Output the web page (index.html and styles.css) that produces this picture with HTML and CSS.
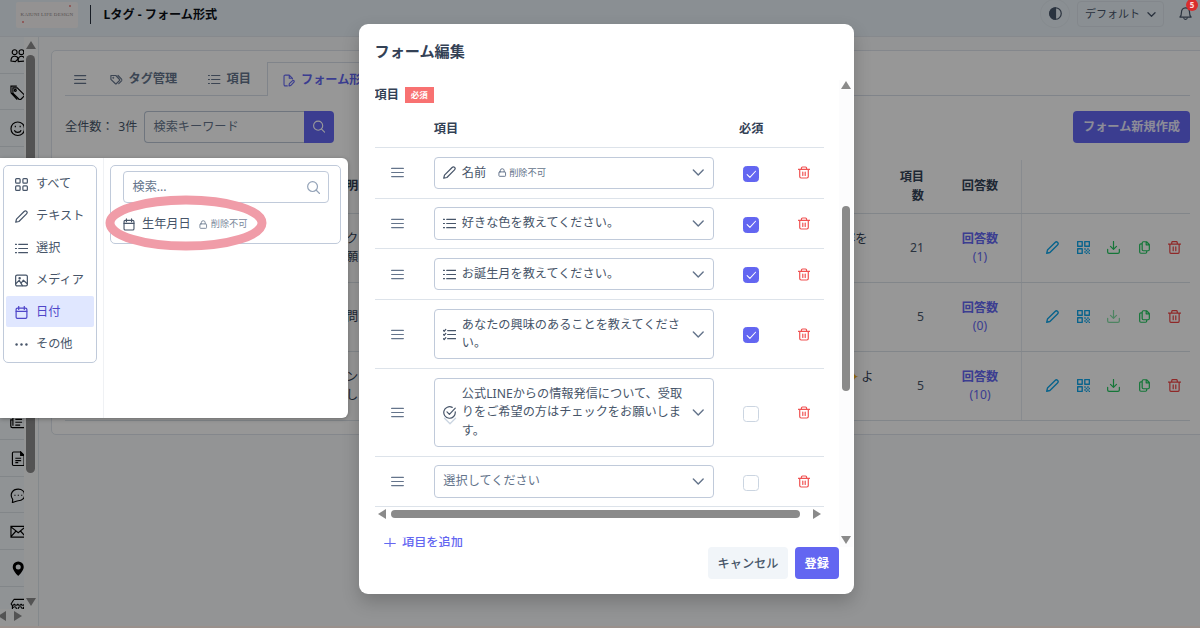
FILE: index.html
```html
<!DOCTYPE html>
<html lang="ja">
<head>
<meta charset="utf-8">
<title>Lタグ - フォーム形式</title>
<link rel="stylesheet" href="styles.css">
</head>
<body>
<svg class="defs" aria-hidden="true">
  <symbol id="bars" viewBox="0 0 14 14"><path d="M.7 2.6h12.6M.7 7h12.6M.7 11.4h12.6"/></symbol>
  <symbol id="pencil" viewBox="0 0 14 14"><path d="M.8 13.200l.8-3.400L9.800 1.600c1-1 1.900-.9 2.700-.1s.9 1.700-.1 2.700L4.200 12.400z"/></symbol>
  <symbol id="list" viewBox="0 0 14 14"><path d="M.4 2.500h1.200M.4 7h1.200M.4 11.500h1.200M4 2.500h9.600M4 7h9.600M4 11.500h9.600"/></symbol>
  <symbol id="check-list" viewBox="0 0 14 14"><path d="M.3 2.500l1 1 1.700-2M.3 6.800l1 1L3 5.800M.3 11.400l1 1 1.700-2M5 2.800h8.600M5 7h8.600M5 11.500h8.600"/></symbol>
  <symbol id="check-circle" viewBox="0 0 14 14"><path d="M13.200 6.300A6.200 6.200 0 1 1 9.900 1.500M4.300 6.300l2.600 2.700 6.300-6.700"/></symbol>
  <symbol id="lock" viewBox="0 0 14 14"><rect x="1.500" y="6" width="11" height="7.300" rx="1.200"/><path d="M3.800 6V4a3.200 3.200 0 0 1 6.400 0v2"/></symbol>
  <symbol id="chevron" viewBox="0 0 14 14"><path d="M1.500 4.200L7 9.700l5.500-5.500"/></symbol>
  <symbol id="tick" viewBox="0 0 14 14"><path d="M1.500 7.500l3.700 3.700L12.700 3"/></symbol>
  <symbol id="trash" viewBox="0 0 14 14"><path d="M.5 3.300h13M2 3.300v8.500c0 1 .6 1.600 1.600 1.600h6.800c1 0 1.600-.6 1.600-1.600V3.300M4 3.200V1.800c0-.8.5-1.200 1.200-1.200h3.600c.7 0 1.200.4 1.200 1.200v1.400M5.600 6.400v4M8.400 6.400v4"/></symbol>
  <symbol id="plus" viewBox="0 0 14 14"><path d="M7 .8v12.400M.8 7h12.400"/></symbol>
  <symbol id="search" viewBox="0 0 14 14"><circle cx="6" cy="6" r="5.300"/><path d="M10 10l3.500 3.500"/></symbol>
  <symbol id="grid" viewBox="0 0 14 14"><rect x=".7" y=".7" width="4.800" height="4.800" rx="1"/><rect x="8.500" y=".7" width="4.800" height="4.800" rx="1"/><rect x=".7" y="8.500" width="4.800" height="4.800" rx="1"/><rect x="8.500" y="8.500" width="4.800" height="4.800" rx="1"/></symbol>
  <symbol id="image" viewBox="0 0 14 14"><rect x=".7" y="1.200" width="12.600" height="11.600" rx="1.500"/><path d="M.8 10.500l3.700-3.700L8 12.500M6.500 10l2.500-3.300 4.200 3.800"/><circle cx="5" cy="4.500" r=".7"/></symbol>
  <symbol id="calendar" viewBox="0 0 14 14"><rect x="1.200" y="2.200" width="11.600" height="11.200" rx="1.500"/><path d="M1.200 5.700h11.600M4 .4v3.300M10 .4v3.300"/></symbol>
  <symbol id="dots" viewBox="0 0 14 14"><g fill="currentColor" stroke="none"><circle cx="1.700" cy="7" r="1.300"/><circle cx="7" cy="7" r="1.300"/><circle cx="12.300" cy="7" r="1.300"/></g></symbol>
  <symbol id="tags" viewBox="0 0 14 14"><path d="M1 2.500h5.500l4 4.200c.5.500.5 1 0 1.500l-3.200 3.300c-.5.500-1 .5-1.500 0L1 6.800zM9 2.500l4.200 4.300c.4.500.4.900 0 1.400L9.800 11.600"/><circle cx="3.700" cy="5.100" r=".4"/></symbol>
  <symbol id="file-edit" viewBox="0 0 14 14"><path d="M5 13.300H2.700c-.9 0-1.500-.6-1.500-1.500V2.200c0-.9.6-1.500 1.500-1.500h4.600l3.700 3.700v.8M7.300.8v3.500H11M7 13.300l.4-2.600 3.800-3.500c.9-.8 2.500.6 1.600 1.600l-3.600 3.900z"/></symbol>
  <symbol id="qr" viewBox="0 0 14 14"><path d="M.7.700h4.900v4.900H.7zM8.400.7h4.900v4.900H8.400zM.7 8.400h4.900v4.900H.7z"/><path stroke="none" fill="currentColor" d="M7.800 7.800h1.600v1.600H7.800zM11 7.800h1.600v1.600H11zM9.400 9.400H11V11H9.400zM12.600 9.400H14V11h-1.400zM7.800 11h1.600v1.600H7.800zM11 11h1.600v1.600H11zM9.400 12.600H11V14H9.400zM12.600 12.600H14V14h-1.400z"/></symbol>
  <symbol id="download" viewBox="0 0 14 14"><path d="M7 .5v8.300M3.800 5.800L7 9l3.200-3.200M.7 9v2.800c0 .9.6 1.500 1.500 1.500h9.600c.9 0 1.500-.6 1.500-1.500V9"/></symbol>
  <symbol id="copy" viewBox="0 0 14 14"><path d="M5.800.8h3.400l3 3v5.400c0 .8-.5 1.300-1.300 1.300H5.800c-.8 0-1.300-.5-1.300-1.300V2.100C4.500 1.300 5 .8 5.800.8zM8.800.8v3.300h3.400M4.300 3.200H3.100c-.8 0-1.300.5-1.300 1.300v7.400c0 .8.500 1.300 1.300 1.300h5c.8 0 1.300-.5 1.300-1.300v-1.200"/></symbol>
  <symbol id="contrast" viewBox="0 0 14 14"><circle cx="7" cy="7" r="6.200"/><path d="M7 .8a6.200 6.200 0 0 0 0 12.400z" fill="currentColor"/></symbol>
  <symbol id="bell" viewBox="0 0 14 14"><path d="M1 10.800c1.300-1 1.600-2 1.600-4.600C2.600 3 4.300 1 7 1s4.400 2 4.400 5.200c0 2.600.3 3.600 1.600 4.600zM5.300 12.200c.5 1.400 2.900 1.400 3.400 0"/></symbol>
  <symbol id="users" viewBox="0 0 16 16"><circle cx="4.800" cy="4.300" r="2.500"/><circle cx="11.800" cy="4.300" r="2.500"/><path d="M1 13.500c0-3.400 1.500-5 3.800-5s3.400 1 3.500 2.700L5.500 14zM8.500 14v-2.500c.6-2 1.800-3 3.500-3 2.300 0 3.500 1.500 3.500 5z"/></symbol>
  <symbol id="price-tags" viewBox="0 0 16 16"><path d="M3 3h4.500l7 7c.5.500.5 1 0 1.500L11 15c-.5.500-1 .5-1.500 0L3 8.500zM1 8V1.200h6M1 8l6.500 7"/><circle cx="5.500" cy="5.500" r="1"/></symbol>
  <symbol id="smile" viewBox="0 0 16 16"><circle cx="8" cy="8" r="7"/><path d="M4.500 9.500c1 3 6 3 7 0M5.500 5v1.500M10.500 5v1.500"/></symbol>
  <symbol id="news" viewBox="0 0 16 16"><path d="M3 2h12v12H2.500C1 14 .8 13 .8 12V6H3zM3 6v6M5.500 5.500h7M5.500 8.500h7M5.500 11.500h5"/></symbol>
  <symbol id="doc" viewBox="0 0 16 16"><path d="M3.700 1h7.300l3.500 3.500V15H3.700c-.6 0-1.200-.4-1.200-1.200V2.200C2.500 1.400 3.100 1 3.700 1z"/><path d="M11 1v3.500h3.500z" fill="currentColor"/><path d="M5.500 7.500h6M5.500 10h6M5.500 12h3"/></symbol>
  <symbol id="chat" viewBox="0 0 16 16"><path d="M2.500 15l.3-3.300C-.8 6.500 2.500 1.200 8.500 1.200c8.500 0 9 12 0 12-1.500 0-2.200.6-6 1.800z"/><path d="M4.500 7.500h1.200M8 7.500h1.200M11.500 7.500h1.200"/></symbol>
  <symbol id="mail" viewBox="0 0 16 16"><path d="M1 2.500h15v11H1zM1 3l7.500 6L16 3M1 13l5-5.500M16 13l-5-5.500"/></symbol>
  <symbol id="pin" viewBox="0 0 16 16"><path fill="currentColor" fill-rule="evenodd" stroke="none" d="M8.500.5a5.700 5.700 0 0 0-5.700 5.700c0 3.800 5.700 9.300 5.700 9.300s5.700-5.500 5.700-9.300A5.700 5.700 0 0 0 8.500.5zM8.500 3.600a2.600 2.600 0 1 1 0 5.200 2.600 2.600 0 0 1 0-5.200z"/></symbol>
  <symbol id="shop" viewBox="0 0 16 16"><path d="M4 1.500h12M4 1.500L1.200 6c0 2 2.800 2 3.300 0 .5 2 3 2 3.500 0 .5 2 3 2 3.500 0 .5 2 3 2 3.500 0M2.500 8v7M2.500 10.500c1.500-2 3.500-2 4 0v4M8.500 14.500v-4c.5-2 3.500-2 4 0v4M14 9v6"/></symbol>
</svg>

<div class="app">
  <header class="topbar">
    <div class="logo"><span>KAIUNI LIFE DESIGN</span></div>
    <div class="topbar-rule"></div>
    <h1 class="page-title">Lタグ - フォーム形式</h1>
    <div class="theme-button"><svg class="icon"><use href="#contrast"/></svg></div>
    <div class="account">デフォルト<svg class="icon icon-small"><use href="#chevron"/></svg></div>
    <div class="bell"><svg class="icon"><use href="#bell"/></svg></div>
  </header>

  <div class="body">
    <nav class="sidebar">
      <div class="side-items">
        <div class="side-item"><svg><use href="#users"/></svg></div>
        <div class="side-item"><svg><use href="#price-tags"/></svg></div>
        <div class="side-item"><svg><use href="#smile"/></svg></div>
        <div class="side-item"></div><div class="side-item"></div><div class="side-item"></div>
        <div class="side-item"></div><div class="side-item"></div><div class="side-item"></div>
        <div class="side-item"></div>
        <div class="side-item"><svg><use href="#news"/></svg></div>
        <div class="side-item"><svg><use href="#doc"/></svg></div>
        <div class="side-item"><svg><use href="#chat"/></svg></div>
        <div class="side-item"><svg><use href="#mail"/></svg></div>
        <div class="side-item"><svg><use href="#pin"/></svg></div>
        <div class="side-item"><svg><use href="#shop"/></svg></div>
      </div>
      <div class="side-scroll"><i class="arrow up"></i><i class="side-thumb"></i><i class="arrow down"></i></div>
      <div class="side-hscroll"><i class="arrow left"></i><i class="arrow right"></i></div>
    </nav>

    <main class="main">
      <section class="card">
        <div class="tabs">
          <div class="tab tab-menu"><svg class="icon"><use href="#bars"/></svg></div>
          <div class="tab tab-tags"><svg class="icon"><use href="#tags"/></svg>タグ管理</div>
          <div class="tab tab-items"><svg class="icon"><use href="#list"/></svg>項目</div>
          <div class="tab tab-active"><svg class="icon"><use href="#file-edit"/></svg>フォーム形式</div>
          <div class="tab-fill"></div>
        </div>
        <div class="toolbar">
          <span class="count">全件数： <span>3件</span></span>
          <div class="keyword">検索キーワード</div>
          <div class="search-button"><svg class="icon"><use href="#search"/></svg></div>
          <div class="create-button">フォーム新規作成</div>
        </div>
        <div class="table">
          <div class="tr th">
            <div></div><div class="desc"><p><span>明</span></p></div><div class="num">項目<br>数</div><div class="answers">回答数</div><div class="actions"></div>
          </div>
          <div class="tr">
            <div></div><div class="desc"><p><span>ク</span><span class="end-a">容を</span></p><p><span>願</span></p></div><div class="num">21</div><div class="answers link"><b>回答数</b><br>(1)</div>
            <div class="actions"><svg class="icon blue"><use href="#pencil"/></svg><svg class="icon blue"><use href="#qr"/></svg><svg class="icon green"><use href="#download"/></svg><svg class="icon green"><use href="#copy"/></svg><svg class="icon red"><use href="#trash"/></svg></div>
          </div>
          <div class="tr">
            <div></div><div class="desc"><p><span>問</span></p></div><div class="num">5</div><div class="answers link"><b>回答数</b><br>(0)</div>
            <div class="actions"><svg class="icon blue"><use href="#pencil"/></svg><svg class="icon blue"><use href="#qr"/></svg><svg class="icon green faded"><use href="#download"/></svg><svg class="icon green"><use href="#copy"/></svg><svg class="icon red"><use href="#trash"/></svg></div>
          </div>
          <div class="tr">
            <div></div><div class="desc"><p><span>ン</span><span class="end-b"><em>✦</em>よ</span></p><p><span>し</span></p></div><div class="num">5</div><div class="answers link"><b>回答数</b><br>(10)</div>
            <div class="actions"><svg class="icon blue"><use href="#pencil"/></svg><svg class="icon blue"><use href="#qr"/></svg><svg class="icon green"><use href="#download"/></svg><svg class="icon green"><use href="#copy"/></svg><svg class="icon red"><use href="#trash"/></svg></div>
          </div>
        </div>
      </section>
    </main>
  </div>
</div>

<div class="overlay">
  <section class="modal">
    <h2 class="modal-title">フォーム編集</h2>
    <div class="modal-body">
      <div class="form">
        <div class="field-label">項目<span class="required">必須</span></div>
        <div class="row row-head"><span></span><span>項目</span><span class="center">必須</span><span></span></div>
        <div class="row">
          <svg class="icon handle"><use href="#bars"/></svg>
          <div class="select"><svg class="icon"><use href="#pencil"/></svg><span class="value">名前<small><svg class="icon"><use href="#lock"/></svg>削除不可</small></span><svg class="icon chev"><use href="#chevron"/></svg></div>
          <i class="check on"><svg class="icon"><use href="#tick"/></svg></i><svg class="icon trash"><use href="#trash"/></svg>
        </div>
        <div class="row">
          <svg class="icon handle"><use href="#bars"/></svg>
          <div class="select"><svg class="icon"><use href="#list"/></svg><span class="value">好きな色を教えてください。</span><svg class="icon chev"><use href="#chevron"/></svg></div>
          <i class="check on"><svg class="icon"><use href="#tick"/></svg></i><svg class="icon trash"><use href="#trash"/></svg>
        </div>
        <div class="row">
          <svg class="icon handle"><use href="#bars"/></svg>
          <div class="select"><svg class="icon"><use href="#list"/></svg><span class="value">お誕生月を教えてください。</span><svg class="icon chev"><use href="#chevron"/></svg></div>
          <i class="check on"><svg class="icon"><use href="#tick"/></svg></i><svg class="icon trash"><use href="#trash"/></svg>
        </div>
        <div class="row row-two">
          <svg class="icon handle"><use href="#bars"/></svg>
          <div class="select"><svg class="icon"><use href="#check-list"/></svg><span class="value">あなたの興味のあることを教えてくださ<br>い。</span><svg class="icon chev"><use href="#chevron"/></svg></div>
          <i class="check on"><svg class="icon"><use href="#tick"/></svg></i><svg class="icon trash"><use href="#trash"/></svg>
        </div>
        <div class="row row-three">
          <svg class="icon handle"><use href="#bars"/></svg>
          <div class="select"><span class="consent"><svg class="icon"><use href="#check-circle"/></svg><svg class="icon hint"><use href="#chevron"/></svg></span><span class="value">公式LINEからの情報発信について、受取<br>りをご希望の方はチェックをお願いしま<br>す。</span><svg class="icon chev"><use href="#chevron"/></svg></div>
          <i class="check"></i><svg class="icon trash"><use href="#trash"/></svg>
        </div>
        <div class="row row-last">
          <svg class="icon handle"><use href="#bars"/></svg>
          <div class="select placeholder"><span class="value">選択してください</span><svg class="icon chev"><use href="#chevron"/></svg></div>
          <i class="check"></i><svg class="icon trash"><use href="#trash"/></svg>
        </div>
        <div class="hscroll"><i class="arrow left"></i><i class="hthumb"></i><i class="arrow right"></i></div>
        <div class="add"><svg class="icon"><use href="#plus"/></svg>項目を追加</div>
      </div>
      <div class="vscroll"><i class="arrow up"></i><i class="vthumb"></i><i class="arrow down"></i></div>
    </div>
    <footer class="modal-footer"><div class="btn cancel">キャンセル</div><div class="btn submit">登録</div></footer>
  </section>
</div>

<div class="badge">5</div>

<section class="picker">
  <div class="picker-side">
    <div class="categories">
      <div class="category"><svg class="icon"><use href="#grid"/></svg>すべて</div>
      <div class="category"><svg class="icon"><use href="#pencil"/></svg>テキスト</div>
      <div class="category"><svg class="icon"><use href="#list"/></svg>選択</div>
      <div class="category"><svg class="icon"><use href="#image"/></svg>メディア</div>
      <div class="category selected"><svg class="icon"><use href="#calendar"/></svg>日付</div>
      <div class="category"><svg class="icon"><use href="#dots"/></svg>その他</div>
    </div>
  </div>
  <div class="picker-main">
    <div class="results">
      <div class="picker-search">検索...<svg class="icon"><use href="#search"/></svg></div>
      <div class="result"><svg class="icon"><use href="#calendar"/></svg>生年月日<small><svg class="icon"><use href="#lock"/></svg>削除不可</small></div>
    </div>
  </div>
  <svg class="marker" viewBox="0 0 162 56"><ellipse cx="81" cy="28" rx="76" ry="23"/></svg>
</section>
</body>
</html>
```

FILE: styles.css
```css
* { box-sizing: border-box; }
body {
  margin: 0;
  width: 1200px;
  height: 628px;
  overflow: hidden;
  position: relative;
  font: 12.180px/18.400px "Noto Sans", "Noto Sans CJK JP", sans-serif;
  color: #475569;
}
h1, h2, p { margin: 0; }
.defs { position: absolute; width: 0; height: 0; }
.icon {
  width: 13px; height: 13px; flex: none; display: block;
  fill: none; stroke: currentColor; stroke-width: 1.300;
  stroke-linecap: round; stroke-linejoin: round; overflow: visible;
}
.icon-small { width: 9px; height: 9px; stroke-width: 2; }

/* Scrollbar arrows */
.arrow { display: block; width: 0; height: 0; border: 5px solid transparent; flex: none; }
.arrow.up { border-top: 0; border-bottom: 8px solid #8a8a8a; }
.arrow.down { border-bottom: 0; border-top: 8px solid #8a8a8a; }
.arrow.left { border-left: 0; border-right: 8px solid #8a8a8a; }
.arrow.right { border-right: 0; border-left: 8px solid #8a8a8a; }

/* Application shell */
.app { height: 628px; display: flex; flex-direction: column; background: #f5f7f9; border-bottom: 2px solid #fff0ea; }
.topbar {
  height: 37px; flex: none; display: flex; align-items: flex-start;
  background: #e7eff5; border-bottom: 1px solid #dfe5eb; padding-left: 16px;
}
.logo {
  width: 62px; height: 26px; margin-top: 2px; background: #f7f4f4; border-radius: 2px;
  display: flex; align-items: center; justify-content: center;
  font: 5px/6px "Liberation Serif", serif; letter-spacing: .2px; color: #8f8585; white-space: nowrap;
  background-image: radial-gradient(circle at 54px 4px, #ee9a9a 1px, transparent 1.500px), radial-gradient(circle at 7px 20px, #ee9a9a 1px, transparent 1.500px);
}
.topbar-rule { width: 1px; height: 19px; margin: 5px 12.500px 0 12px; background: #27303c; }
.page-title { font-size: 12.150px; line-height: 18px; font-weight: 700; color: #0b0f17; margin-top: 6px; white-space: nowrap; flex: 1; }
.theme-button { width: 30px; height: 29px; border: 1px solid #dfe7ee; border-radius: 50%; display: grid; place-items: center; margin-right: 7px; margin-top: -1px; }
.account { width: 87px; height: 26px; border: 1px solid #dae2e9; border-radius: 4px; display: flex; align-items: center; justify-content: center; gap: 7px; font-size: 11px; margin: 1px 15px 0 0; }
.bell { width: 21px; padding-top: 7px; }
.body { flex: 1; min-height: 0; display: flex; }
.sidebar { width: 39px; flex: none; border-right: 1px solid #dde4ea; display: grid; grid-template: 572px 1fr / 24px 1fr; background: #f7f8f9; color: #000; }
.side-items { overflow: hidden; background: #f1f5f8; }
.side-item { width: 36px; height: 36.650px; border-bottom: 1px solid #d9dfe5; display: flex; align-items: center; justify-content: center; padding-top: 2px; }
.side-item svg { width: 15.500px; height: 15.500px; fill: none; stroke: currentColor; stroke-width: 1.2; }
.side-scroll { display: flex; flex-direction: column; align-items: center; padding: 4px 1px 0 0; }
.side-thumb { width: 8.500px; height: 418px; border-radius: 5px; background: #8a8a8a; margin: 6px 0 125px; flex: none; }
.side-hscroll { grid-column: 1 / 3; display: flex; gap: 8px; padding-top: 2px; margin-left: -2px; }
.main { flex: 1; min-width: 0; padding: 13px 0 0 12px; }

.card { width: 1160px; height: 385px; border: 1px solid #dce2e9; border-radius: 5px; background: #fcfcfc; padding: 11px 0 0 13px; }
.tabs { display: flex; width: 1125px; height: 34px; }
.tab { display: flex; align-items: center; gap: 6px; border-bottom: 1px solid #d5dce6; font-weight: 600; padding-top: 1px; color: #64748b; white-space: nowrap; }
.tab .icon { width: 12.500px; }
.tab-menu { width: 45px; padding-left: 9px; }
.tab-tags { width: 98px; }
.tab-items { width: 59px; }
.tab-active { width: 118px; padding-left: 15px; border: 1px solid #d5dce6; border-bottom: 0; color: #6366f1; }
.tab-active .icon { width: 12px; }
.tab-fill { flex: 1; border-bottom: 1px solid #d5dce6; }
.toolbar { display: flex; align-items: center; width: 1125px; height: 32px; margin-top: 14.500px; }
.count { width: 78.500px; white-space: nowrap; padding-top: 1px; }
.count span { margin-left: 1.500px; }
.keyword { width: 160px; height: 32px; border: 1px solid #b9c4d2; border-right: 0; border-radius: 4px 0 0 4px; padding: 6.500px 9px; color: #64748b; }
.search-button { width: 30.500px; height: 32px; background: #6366f1; color: #fff; border-radius: 0 4px 4px 0; display: grid; place-items: center; }
.search-button .icon { width: 12px; }
.create-button { margin-left: auto; width: 117px; height: 32px; border-radius: 4px; background: #6366f1; color: #e9e9fd; font-weight: 600; line-height: 32.500px; text-align: center; white-space: nowrap; }
.table { width: 1125px; margin-top: 17px; }
.tr { display: grid; grid-template-columns: 281px 539.500px 38.500px 97px 169px; height: 69px; align-items: center; border-bottom: 1px solid #d9e0e7; }
.tr.th { height: 54px; font-weight: 700; color: #334155; }
.tr > div { padding-top: 1px; }
.desc { color: #334155; }
.desc p { height: 18.400px; display: flex; justify-content: space-between; }
.end-a { margin-right: 18px; }
.end-b { margin-right: 12px; }
.end-b em { color: #f5b516; font-style: normal; margin-right: 2px; }
.num { text-align: right; white-space: nowrap; }
.answers { text-align: center; padding-left: 15px; }
.link { color: #6366f1; }
.tr .actions { align-self: stretch; display: flex; align-items: center; gap: 17.600px; border-left: 1px solid #e3e8ee; padding: 0 0 0 24px; }
.blue { color: #0ea5e9; }
.green { color: #22c55e; }
.red { color: #ef4444; }
.actions .blue { stroke-width: 1.500; }
.faded { opacity: .55; }

/* Form editing dialog */
.overlay { position: absolute; inset: 0; background: rgba(0, 0, 0, .4); padding: 24px 0 0 359px; }
.modal { width: 495px; height: 570px; border-radius: 9px; background: #fff; box-shadow: 0 8px 18px rgba(0, 0, 0, .2); padding: 15px 1px 0 15.500px; }
.modal-title { font-size: 15.150px; line-height: 24px; font-weight: 700; color: #334155; }
.modal-body { display: flex; margin-top: 17px; height: 467px; }
.form { width: 449.500px; height: 467px; overflow: hidden; }
.field-label { display: flex; align-items: center; gap: 6px; height: 30px; font-weight: 600; color: #334155; }
.required { width: 29px; height: 16px; background: #f87171; color: #fff; font-size: 8.500px; line-height: 16px; font-weight: 700; text-align: center; }
.row { height: 50.700px; display: grid; grid-template-columns: 59.300px 280.500px 74px 1fr; align-items: center; border-bottom: 1px solid #dde3ea; }
.row-head { height: 38px; font-weight: 700; color: #334155; padding-top: 1px; }
.center { text-align: center; }
.row-two { height: 69px; }
.row-three { height: 87.500px; }
.row-last { height: 50.500px; }
.handle { margin-left: 16.500px; color: #64748b; }
.select { min-height: 32px; border: 1px solid #c0cada; border-radius: 4px; padding: 6px 8.500px; display: flex; align-items: center; gap: 5.500px; }
.value { flex: 1; display: flow-root; white-space: nowrap; }
.value small, .result small { display: inline-flex; align-items: center; gap: 3px; font-size: 9.200px; margin-left: 11.500px; color: #64748b; vertical-align: top; }
small .icon { width: 8.500px; height: 9px; stroke-width: 1.600; }
.placeholder { color: #64748b; }
.row-two .select { height: 50.500px; }
.row-three .select { height: 69.500px; }
.chev { color: #64748b; width: 12.500px; stroke-width: 1.600; }
.consent { position: relative; }
.hint { position: absolute; left: 0; top: 8px; width: 14px; height: 14px; color: #cbd5e1; }
.check { width: 16px; height: 16px; justify-self: center; border: 1.500px solid #cbd5e1; border-radius: 3.500px; position: relative; top: 1.200px; display: grid; place-items: center; }
.check.on { background: #6366f1; border-color: #6366f1; color: #fff; }
.check .icon { width: 10.500px; height: 10.500px; stroke-width: 1.400; }
.trash { color: #f05252; width: 12px; stroke-width: 1.400; margin-left: 9.500px; }
.hscroll { display: flex; align-items: center; height: 14px; padding-left: 3px; }
.hthumb { width: 408.500px; height: 8.500px; border-radius: 5px; background: #8a8a8a; margin: 0 13px 0 5.500px; }
.add { display: flex; align-items: center; gap: 6px; height: 30px; margin-top: 7.500px; padding-left: 9.500px; color: #6366f1; font-weight: 500; }
.add .icon { width: 12px; }
.vscroll { margin-left: auto; width: 14px; display: flex; flex-direction: column; align-items: center; padding-top: 1px; background: #fcfcfd; }
.vthumb { width: 8.500px; height: 185px; border-radius: 5px; background: #8a8a8a; margin: 117px 0 145px; flex: none; }
.modal-footer { display: flex; justify-content: flex-end; gap: 7px; padding-right: 14.500px; }
.btn { height: 32px; line-height: 33px; border-radius: 4px; text-align: center; font-weight: 500; }
.cancel { width: 80px; background: #f1f5f9; }
.submit { width: 43.500px; background: #6366f1; color: #fff; font-weight: 600; }

.badge { position: absolute; left: 1186px; top: -1px; width: 12px; height: 12px; border-radius: 50%; background: #d92d2d; color: #ffdcdc; font-size: 8px; line-height: 12px; font-weight: 700; text-align: center; }

/* Item picker floating over the page */
.picker { position: absolute; left: 0; top: 158px; width: 347.500px; height: 260px; background: #fff; border-radius: 0 6px 6px 0; box-shadow: 0 1px 4px rgba(0, 0, 0, .3); display: flex; }
.picker-side { width: 104px; border-right: 1px solid #eff1f4; padding: 7px 0 0 3px; }
.categories { width: 93.500px; height: 198px; border: 1px solid #c0cada; border-radius: 5px; padding: 2px; }
.category { height: 32px; display: flex; align-items: center; gap: 8px; padding-left: 9px; white-space: nowrap; }
.selected { height: 31px; margin-bottom: 1px; background: #e0e7ff; color: #4f46c9; border-radius: 2px; padding-top: 1px; }
.picker-main { padding: 7px 0 0 6px; }
.results { width: 231px; height: 79px; border: 1px solid #c0cada; border-radius: 5px; padding: 5px 11.500px; }
.picker-search { width: 206px; height: 32px; border: 1px solid #c0cada; border-radius: 4px; display: flex; align-items: center; justify-content: space-between; padding: 0 8px 0 9px; color: #64748b; }
.picker-search .icon { color: #94a3b8; }
.result { display: flex; align-items: center; height: 41px; padding-top: 1px; gap: 7.500px; white-space: nowrap; }
.result .icon { width: 12px; }
.result small { margin-left: 1px; color: #7b889b; }
.result small .icon { width: 8.500px; }
.marker { position: absolute; left: 104.500px; top: 36.500px; width: 162px; height: 56px; fill: none; stroke: #f09ca8; stroke-width: 9; }
```
